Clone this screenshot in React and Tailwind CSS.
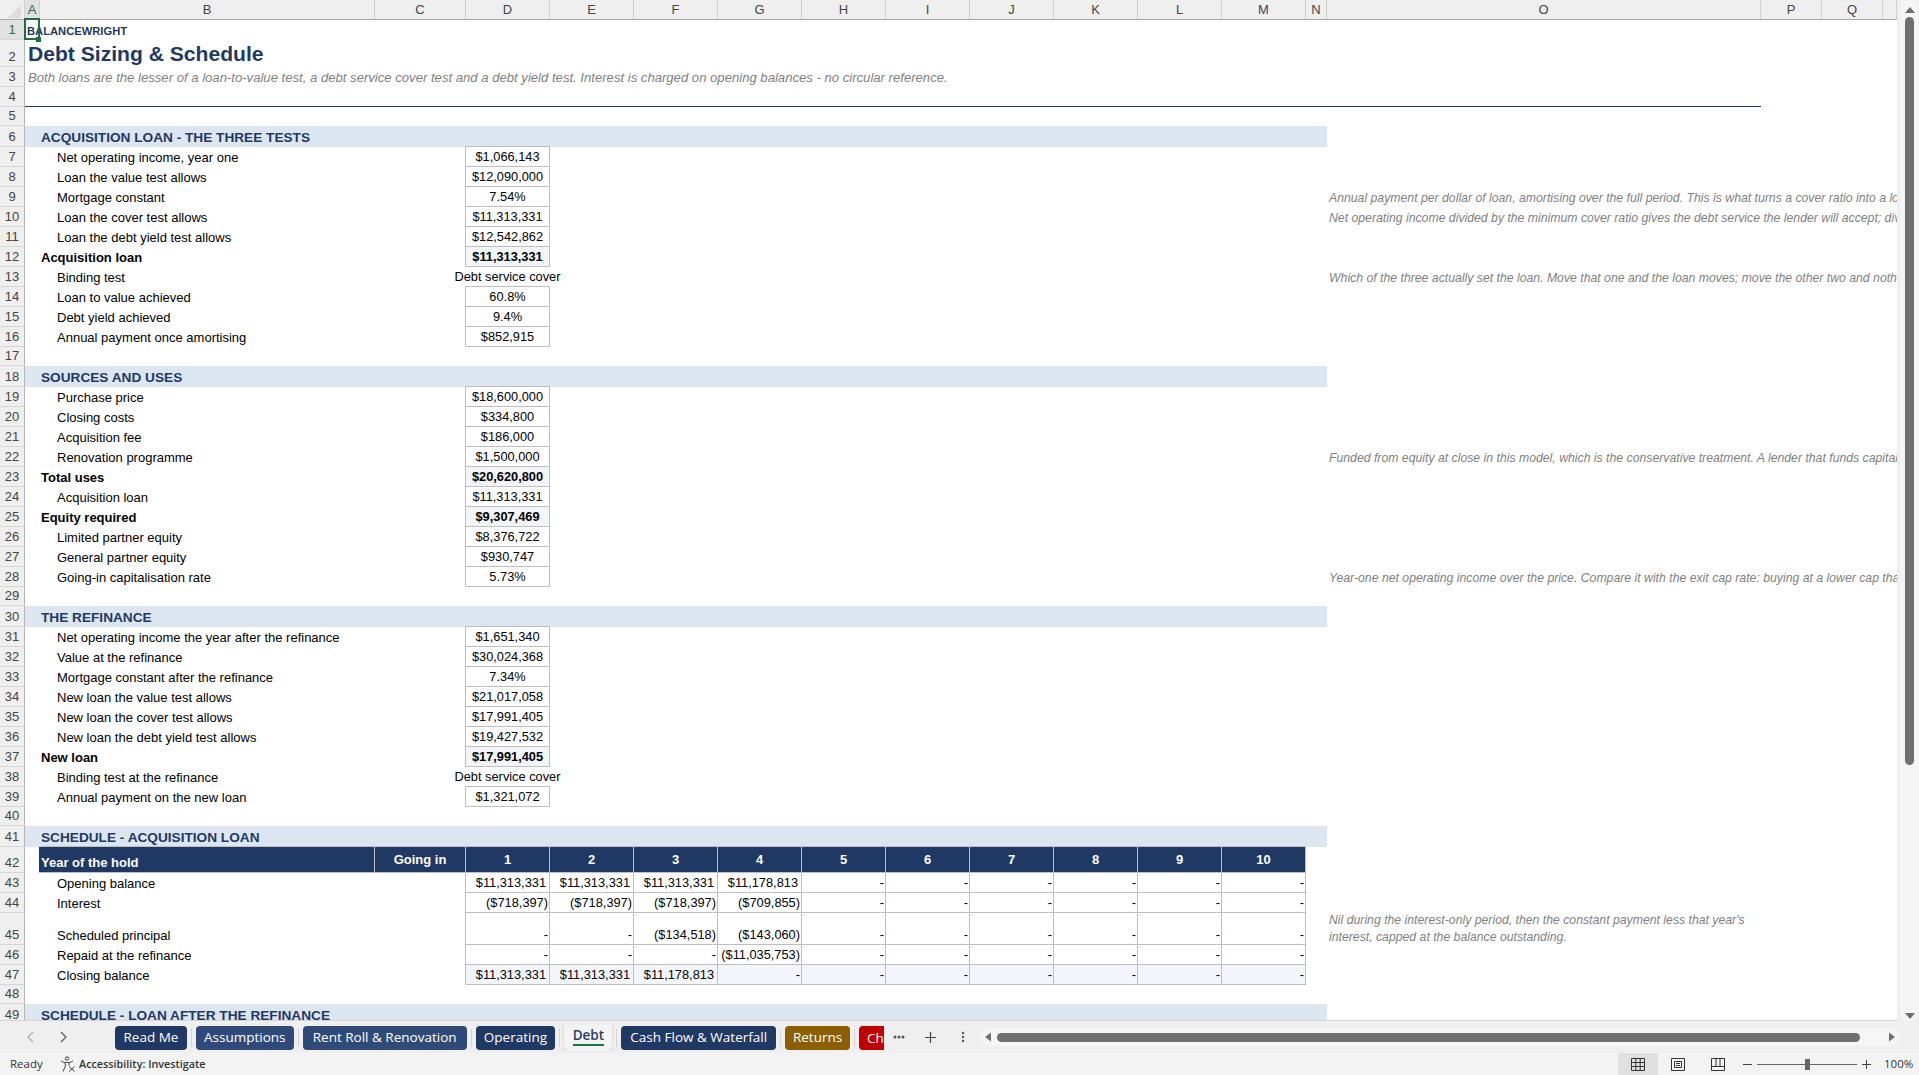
import React from 'react';

const columns = [
	{ label: 'A', w: 'w-[15px]', active: true },
	{ label: 'B', w: 'w-[335px]' },
	{ label: 'C', w: 'w-[91px]' },
	...['D', 'E', 'F', 'G', 'H', 'I', 'J', 'K', 'L', 'M'].map((label) => ({ label, w: 'w-[84px]' })),
	{ label: 'N', w: 'w-[21px]' },
	{ label: 'O', w: 'w-[434px]' },
	{ label: 'P', w: 'w-[61px]' },
	{ label: 'Q', w: 'w-[61px]' },
	{ label: '', w: 'flex-1' },
];

const dash = ['-', '-', '-', '-', '-'];

// n = row number, h = height class, kind = what the row holds
const rows = [
	{ n: 5, h: 'h-[19px]' },
	{ n: 6, kind: 'section', text: 'ACQUISITION LOAN - THE THREE TESTS' },
	{ n: 7, label: 'Net operating income, year one', value: '$1,066,143', top: true },
	{ n: 8, label: 'Loan the value test allows', value: '$12,090,000' },
	{ n: 9, label: 'Mortgage constant', value: '7.54%', note: 'Annual payment per dollar of loan, amortising over the full period. This is what turns a cover ratio into a loan' },
	{ n: 10, label: 'Loan the cover test allows', value: '$11,313,331', note: 'Net operating income divided by the minimum cover ratio gives the debt service the lender will accept; divide' },
	{ n: 11, label: 'Loan the debt yield test allows', value: '$12,542,862' },
	{ n: 12, label: 'Acquisition loan', value: '$11,313,331', bold: true },
	{ n: 13, label: 'Binding test', plain: 'Debt service cover', note: 'Which of the three actually set the loan. Move that one and the loan moves; move the other two and nothing' },
	{ n: 14, label: 'Loan to value achieved', value: '60.8%', top: true },
	{ n: 15, label: 'Debt yield achieved', value: '9.4%' },
	{ n: 16, label: 'Annual payment once amortising', value: '$852,915' },
	{ n: 17, h: 'h-[19px]' },
	{ n: 18, kind: 'section', text: 'SOURCES AND USES' },
	{ n: 19, label: 'Purchase price', value: '$18,600,000', top: true },
	{ n: 20, label: 'Closing costs', value: '$334,800' },
	{ n: 21, label: 'Acquisition fee', value: '$186,000' },
	{ n: 22, label: 'Renovation programme', value: '$1,500,000', note: 'Funded from equity at close in this model, which is the conservative treatment. A lender that funds capital' },
	{ n: 23, label: 'Total uses', value: '$20,620,800', bold: true },
	{ n: 24, label: 'Acquisition loan', value: '$11,313,331' },
	{ n: 25, label: 'Equity required', value: '$9,307,469', bold: true },
	{ n: 26, label: 'Limited partner equity', value: '$8,376,722' },
	{ n: 27, label: 'General partner equity', value: '$930,747' },
	{ n: 28, label: 'Going-in capitalisation rate', value: '5.73%', note: 'Year-one net operating income over the price. Compare it with the exit cap rate: buying at a lower cap than' },
	{ n: 29, h: 'h-[19px]' },
	{ n: 30, kind: 'section', text: 'THE REFINANCE' },
	{ n: 31, label: 'Net operating income the year after the refinance', value: '$1,651,340', top: true },
	{ n: 32, label: 'Value at the refinance', value: '$30,024,368' },
	{ n: 33, label: 'Mortgage constant after the refinance', value: '7.34%' },
	{ n: 34, label: 'New loan the value test allows', value: '$21,017,058' },
	{ n: 35, label: 'New loan the cover test allows', value: '$17,991,405' },
	{ n: 36, label: 'New loan the debt yield test allows', value: '$19,427,532' },
	{ n: 37, label: 'New loan', value: '$17,991,405', bold: true },
	{ n: 38, label: 'Binding test at the refinance', plain: 'Debt service cover' },
	{ n: 39, label: 'Annual payment on the new loan', value: '$1,321,072', top: true },
	{ n: 40, h: 'h-[19px]' },
	{ n: 41, kind: 'section', text: 'SCHEDULE - ACQUISITION LOAN' },
	{ n: 42, kind: 'head' },
	{ n: 43, label: 'Opening balance', sched: ['$11,313,331', '$11,313,331', '$11,313,331', '$11,178,813', '-', ...dash] },
	{ n: 44, label: 'Interest', sched: ['($718,397)', '($718,397)', '($718,397)', '($709,855)', '-', ...dash] },
	{ n: 45, h: 'h-[32px]', label: 'Scheduled principal', sched: ['-', '-', '($134,518)', '($143,060)', '-', ...dash], wrapNote: true },
	{ n: 46, label: 'Repaid at the refinance', sched: ['-', '-', '-', '($11,035,753)', '-', ...dash] },
	{ n: 47, label: 'Closing balance', sched: ['$11,313,331', '$11,313,331', '$11,178,813', '-', '-', ...dash], shaded: true },
	{ n: 48, h: 'h-[19px]' },
	{ n: 49, kind: 'section', text: 'SCHEDULE - LOAN AFTER THE REFINANCE' },
];

const tabs = [
	{ name: 'Read Me', cls: 'w-[72px] bg-[#1f3864]' },
	{ name: 'Assumptions', cls: 'w-[98px] bg-[#2f4a78]' },
	{ name: 'Rent Roll & Renovation', cls: 'w-[164px] bg-[#2f4a78]' },
	{ name: 'Operating', cls: 'w-[80px] bg-[#1f3864]' },
	{ name: 'Debt', active: true },
	{ name: 'Cash Flow & Waterfall', cls: 'w-[155px] bg-[#1f3864]' },
	{ name: 'Returns', cls: 'w-[65px] bg-[#8b5e00]' },
];

const RowNumber = ({ n, active }) => (
	<div className={`w-[25px] shrink-0 flex items-end justify-center border-r border-b border-r-[#b5b5b5] border-b-[#d6d6d6] text-[13px] leading-[18px] ${active ? 'bg-[#e1e1e1] text-[#217346]' : 'bg-[#efefef] text-[#444]'}`}>
		{n}
	</div>
);

const Note = ({ children }) => (
	<div className="absolute left-[1329px] top-px text-[12.25px] italic leading-[20px] text-[#7f7f7f] whitespace-nowrap">{children}</div>
);

const Row = ({ row }) => {
	if (row.kind === 'section') {
		return (
			<div className="flex h-[21px] shrink-0">
				<RowNumber n={row.n} />
				<div className="w-[1302px] bg-[#dce6f1] pl-[16px] pt-px text-[13.65px] font-bold leading-[21px] text-[#1f3864]">{row.text}</div>
			</div>
		);
	}
	if (row.kind === 'head') {
		return (
			<div className="flex h-[26px] shrink-0">
				<RowNumber n={row.n} />
				<div className="w-[14px]" />
				<div className="-mt-px flex text-[13px] font-bold text-white">
					<div className="w-[336px] bg-[#1f3864] border-t border-b border-r border-[#bfbfbf] pl-[2px] flex items-end leading-[18px]">Year of the hold</div>
					<div className="w-[91px] bg-[#1f3864] border-t border-b border-r border-[#bfbfbf] flex justify-center pt-[4px] leading-[18px]">Going in</div>
					{[1, 2, 3, 4, 5, 6, 7, 8, 9, 10].map((y) => (
						<div key={y} className="w-[84px] bg-[#1f3864] border-t border-b border-r border-[#bfbfbf] flex justify-center pt-[4px] leading-[18px]">{y}</div>
					))}
				</div>
			</div>
		);
	}
	const h = row.h || 'h-[20px]';
	return (
		<div className={`relative flex shrink-0 ${h}`}>
			<RowNumber n={row.n} />
			<div className="w-[14px]" />
			{row.label && (
				<div className={`w-[335px] flex items-end text-[13px] leading-[18px] text-black whitespace-nowrap ${row.bold ? 'pl-[2px] font-bold' : 'pl-[18px]'}`}>{row.label}</div>
			)}
			{row.label && !row.sched && <div className="w-[91px]" />}
			{row.value && (
				<div className={`w-[85px] flex justify-center border-l border-r border-b border-[#bfbfbf] text-[12.8px] leading-[19px] text-black ${row.top ? '-mt-px border-t' : ''} ${row.bold ? 'bg-[#f2f5fa] font-bold' : ''}`}>
					{row.value}
				</div>
			)}
			{row.plain && <div className="w-[85px] flex justify-center text-[12.8px] leading-[19px] text-black whitespace-nowrap">{row.plain}</div>}
			{row.sched && (
				<div className="flex">
					<div className="w-[91px]" />
					{row.sched.map((v, i) => (
						<div key={i} className={`flex items-end justify-end border-r border-b border-[#bfbfbf] text-[12.8px] leading-[18px] text-black whitespace-nowrap ${i === 0 ? 'w-[85px] border-l' : 'w-[84px]'} ${v[0] === '$' ? 'pr-[3px]' : 'pr-[1px]'} ${row.shaded ? 'bg-[#f2f5fa]' : ''}`}>
							{v}
						</div>
					))}
				</div>
			)}
			{row.note && <Note>{row.note}</Note>}
			{row.wrapNote && (
				<div className="absolute left-[1329px] -top-px w-[428px] text-[12.25px] italic leading-[17px] text-[#7f7f7f]">
					Nil during the interest-only period, then the constant payment less that year's interest, capped at the balance outstanding.
				</div>
			)}
		</div>
	);
};

const Tab = ({ tab }) => {
	if (tab.active) {
		return (
			<div className="-mt-[4px] w-[48px] h-[29px] rounded-b-[4px] bg-[#f4f4f4] shadow-[0_1px_2px_rgba(0,0,0,0.25)] flex flex-col items-center pt-[5px] text-[13.5px] font-semibold leading-[18px] text-[#2b3f63]">
				{tab.name}
				<div className="h-[2px] w-[31px] bg-[#107c41]" />
			</div>
		);
	}
	return (
		<div className={`h-[24px] rounded-[4px] flex items-center justify-center text-[13.5px] text-white whitespace-nowrap ${tab.cls}`}>{tab.name}</div>
	);
};

const Divider = () => <div className="mx-[4px] h-[18px] w-px bg-[#d4d4d4]" />;

export default function App() {
	return (
		<div className="w-[1919px] h-[1075px] flex flex-col overflow-hidden bg-[#efefef] font-['Liberation_Sans',Arial,sans-serif]">
			<div className="flex h-[1021px] shrink-0">
				{/* Sheet */}
				<div className="w-[1897px] shrink-0 flex flex-col overflow-hidden bg-white border-b border-[#d6d6d6]">
					<div className="flex h-[20px] shrink-0 bg-[#efefef] border-b border-[#a9a9a9]">
						<div className="w-[25px] border-r border-[#d0d0d0]">
							<svg width="24" height="19" viewBox="0 0 24 19"><path d="M21 5v13H8z" fill="#dcdcdc" /></svg>
						</div>
						{columns.map((c) => (
							<div key={c.label} className={`flex justify-center border-r border-[#d0d0d0] text-[13px] leading-[19px] ${c.w} ${c.active ? 'bg-[#e1e1e1] text-[#217346]' : 'text-[#444]'}`}>
								{c.label}
							</div>
						))}
					</div>

					<div className="flex h-[20px] shrink-0">
						<RowNumber n={1} active />
						<div className="relative w-[14px]">
							<div className="absolute -left-px -top-[2px] w-[16px] h-[22px] border-2 border-[#1e6e42]" />
							<div className="absolute left-[11px] top-[17px] w-[5px] h-[5px] bg-[#1e6e42]" />
						</div>
						<div className="-ml-[12px] pt-px text-[11.2px] font-bold leading-[20px] text-[#1f3864]">BALANCEWRIGHT</div>
					</div>
					<div className="flex h-[27px] shrink-0">
						<RowNumber n={2} />
						<div className="pl-[3px] text-[21.1px] font-bold leading-[27px] text-[#1f3864] whitespace-nowrap">Debt Sizing &amp; Schedule</div>
					</div>
					<div className="flex h-[20px] shrink-0">
						<RowNumber n={3} />
						<div className="pl-[3px] pt-px text-[13.12px] italic leading-[20px] text-[#7f7f7f] whitespace-nowrap">Both loans are the lesser of a loan-to-value test, a debt service cover test and a debt yield test. Interest is charged on opening balances - no circular reference.</div>
					</div>
					<div className="flex h-[20px] shrink-0">
						<RowNumber n={4} />
						<div className="w-[1736px] border-b border-[#1f3864]" />
					</div>

					{rows.map((row) => <Row key={row.n} row={row} />)}
				</div>

				{/* Vertical scrollbar */}
				<div className="flex-1 flex flex-col items-center ml-[3px] rounded-[9px] bg-[#f5f5f5] pt-[6px] pb-[1px]">
					<svg width="12" height="8" viewBox="0 0 12 8"><path d="M6 1l5 6H1z" fill="#6f6f6f" /></svg>
					<div className="mt-[3px] w-[9px] h-[748px] rounded-[5px] bg-[#6f6f6f]" />
					<div className="flex-1" />
					<svg width="12" height="8" viewBox="0 0 12 8"><path d="M6 7L1 1h10z" fill="#6f6f6f" /></svg>
				</div>
			</div>

			{/* Tab strip */}
			<div className="flex items-start h-[32px] shrink-0 pt-[4px] font-['Open_Sans',sans-serif]">
				<div className="w-[115px] shrink-0 flex items-center h-[24px] pl-[24px] gap-[18px]">
					<svg width="14" height="14" viewBox="0 0 14 14" fill="none" stroke="#a8a8a8" strokeWidth="1.2"><path d="M9 2L4 7l5 5" /></svg>
					<svg width="14" height="14" viewBox="0 0 14 14" fill="none" stroke="#555" strokeWidth="1.2"><path d="M5 2l5 5-5 5" /></svg>
				</div>
				<div className="flex items-center w-[769px] shrink-0 overflow-hidden">
					{tabs.map((tab) => (
						<React.Fragment key={tab.name}>
							<Tab tab={tab} />
							<Divider />
						</React.Fragment>
					))}
					<div className="w-[25px] shrink-0 h-[24px] rounded-l-[4px] bg-[#c00000] pl-[8px] text-[13.5px] leading-[24px] text-white overflow-hidden whitespace-nowrap">Chart</div>
				</div>
				<div className="flex items-center h-[24px] w-[96px] shrink-0 text-[#444]">
					<svg className="ml-[9px]" width="12" height="4" viewBox="0 0 12 4" fill="#555"><circle cx="2" cy="2" r="1.5" /><circle cx="6" cy="2" r="1.5" /><circle cx="10" cy="2" r="1.5" /></svg>
					<svg className="ml-[19px]" width="13" height="13" viewBox="0 0 13 13" stroke="#444" strokeWidth="1.2"><path d="M6.5 1v11M1 6.5h11" /></svg>
					<svg className="ml-[24px]" width="4" height="12" viewBox="0 0 4 12" fill="#555"><circle cx="2" cy="2" r="1.2" /><circle cx="2" cy="6" r="1.2" /><circle cx="2" cy="10" r="1.2" /></svg>
				</div>
				<div className="mt-[3px] w-[920px] h-[18px] shrink-0 rounded-[9px] bg-[#f6f6f6] flex items-center pl-[4px]">
					<svg width="8" height="10" viewBox="0 0 8 10"><path d="M1 5l6-4.500v9z" fill="#6f6f6f" /></svg>
					<div className="ml-[5px] w-[863px] h-[9px] rounded-[5px] bg-[#6f6f6f]" />
					<svg className="ml-[28px]" width="8" height="10" viewBox="0 0 8 10"><path d="M7 5L1 .5v9z" fill="#6f6f6f" /></svg>
				</div>
			</div>

			{/* Status bar */}
			<div className="flex items-center h-[22px] shrink-0 bg-[#f3f3f3] text-[11.5px] text-[#333] font-['Open_Sans',sans-serif]">
				<div className="pl-[10px] w-[60px]">Ready</div>
				<svg width="16" height="16" viewBox="0 0 16 16" fill="none" stroke="#444" strokeWidth="1">
					<circle cx="7" cy="2.500" r="1.700" />
					<path d="M1 4.800c1.500 1.200 3 1.700 3.500 1.700h5c.5 0 2-.5 3.500-1.700M4.800 6.500l.7 3.500-2.500 5.500M9.300 6.500l-.3 3" />
					<path d="M9 10.500l5.500 5M14.500 10.500l-5.500 5" />
				</svg>
				<div className="ml-[3px] text-[10.8px] font-semibold text-[#333]">Accessibility: Investigate</div>
				<div className="flex-1" />
				<div className="w-[40px] h-[22px] bg-[#e0e0e0] flex items-center justify-center">
					<svg width="14" height="13" viewBox="0 0 14 13" fill="none" stroke="#333"><path d="M.5.500h13v12H.5zM.5 4.500h13M.5 8.500h13M4.800.500v12M9.200.500v12" /></svg>
				</div>
				<div className="w-[40px] flex justify-center">
					<svg width="14" height="13" viewBox="0 0 14 13" fill="none" stroke="#333"><path d="M.5.500h13v12H.5zM3.500 3.500h7v6h-7zM5 5.500h4M5 7.500h4" /></svg>
				</div>
				<div className="w-[40px] flex justify-center">
					<svg width="14" height="13" viewBox="0 0 14 13" fill="none" stroke="#333"><path d="M.5.500h13v12H.5zM.5 8.500h13M5 .500v8M9 .500v8" /></svg>
				</div>
				<svg className="ml-[5px]" width="9" height="9" viewBox="0 0 9 9" stroke="#444"><path d="M0 4.500h9" /></svg>
				<div className="ml-[5px] w-[100px] h-[1px] bg-[#666] relative">
					<div className="absolute left-[48px] -top-[5px] w-[5px] h-[11px] bg-[#666]" />
				</div>
				<svg className="ml-[5px]" width="9" height="9" viewBox="0 0 9 9" stroke="#444"><path d="M0 4.500h9M4.500 0v9" /></svg>
				<div className="ml-[13px] w-[35px] text-[11.5px]">100%</div>
			</div>
		</div>
	);
}
